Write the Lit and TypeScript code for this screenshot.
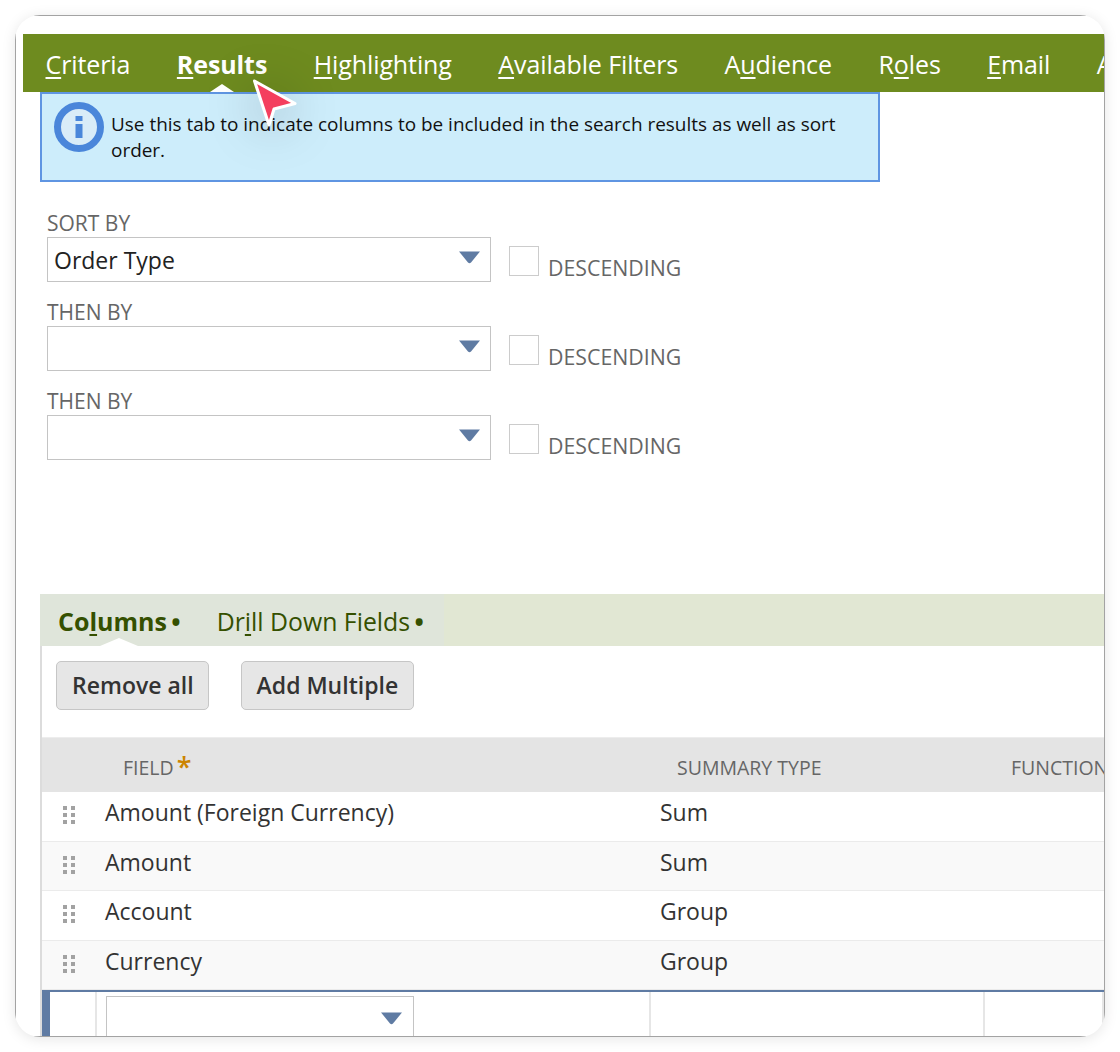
import { LitElement, html, css, svg } from "lit";
import { customElement } from "lit/decorators.js";

const caret = svg`<svg class="caret" width="23" height="14" viewBox="0 0 23 14"><path d="M1 1.5H22L13 12.5Q11.5 13.8 10 12.5Z" fill="#5f7ba3"/></svg>`;

const grip = html`<svg class="grip" width="12" height="18" viewBox="0 0 12 18"><g fill="#a2a2a2"><rect x="0" y="0" width="4" height="4"/><rect x="8" y="0" width="4" height="4"/><rect x="0" y="7" width="4" height="4"/><rect x="8" y="7" width="4" height="4"/><rect x="0" y="14" width="4" height="4"/><rect x="8" y="14" width="4" height="4"/></g></svg>`;

@customElement("app-root")
export class AppRoot extends LitElement {
  static styles = css`
    :host { display: block; width: 1120px; height: 1052px; background: #fff; font-family: "Open Sans", sans-serif; overflow: hidden; }
    .page { padding: 15px; height: 1052px; box-sizing: border-box; }
    .win { height: 1022px; border-radius: 25px; overflow: hidden; background: #fff; box-shadow: 0 2px 14px rgba(0,0,0,.1); }
    .frame { position: relative; height: 100%; box-sizing: border-box; border: 1px solid #a3a3a3; padding: 18px 0 0 7px; overflow: hidden; }
    .tabs { display: flex; height: 58px; background: #6e8b1f; color: #fff; font-size: 25px; line-height: 60px; padding-left: 22.5px; gap: 46.5px; white-space: nowrap; overflow: hidden; letter-spacing: -0.1px; }
    .tabs span { flex: none; position: relative; }
    .tabs u, .sub u { text-underline-offset: 3px; text-decoration-thickness: 2px; }
    .tabs .on { font-weight: 700; }
    .tabs .on::after { content: ""; position: absolute; left: 33px; bottom: 0; border: 12px solid transparent; border-top: 0; border-bottom: 8px solid #fff; }
    .info { margin: 0 0 0 17px; width: 840px; height: 90px; box-sizing: border-box; background: #cdedfb; border: 2px solid #5f95e2; display: flex; gap: 6px; padding: 7px 11px; font-size: 18.95px; line-height: 26px; color: #111; }
    .info svg { flex: none; }
    .info p { margin: 10px 0 0; width: 750px; }
    .form { margin: 27px 0 0 24px; height: 385px; }
    .lab { font-size: 21px; line-height: 28px; color: #666; }
    .frow { display: flex; height: 61px; align-items: flex-start; }
    .sel { width: 444px; height: 45px; box-sizing: border-box; border: 1px solid #c4c4c4; display: flex; align-items: center; justify-content: space-between; padding: 0 9px 0 6px; font-size: 23px; color: #222; }
    .sel svg { margin-top: -5px; }
    .chk { width: 30px; height: 30px; box-sizing: border-box; border: 1px solid #ccc; margin: 9px 0 0 18px; }
    .dl { font-size: 21.3px; color: #666; margin: 17px 0 0 9px; line-height: 28px; }
    .sub { margin-left: 17px; height: 52px; background: #e1e7d3; font-size: 24.8px; line-height: 55px; color: #355000; }
    .subin { width: 404px; height: 52px; background: #dfe5da; box-sizing: border-box; padding-left: 18px; display: flex; gap: 36px; white-space: nowrap; position: relative; }
    .subin b { font-size: 25px; }
    .subin .d { font-weight: 700; margin-left: -2px; }
    .subin .n { position: absolute; left: 60px; bottom: 0; border: 19px solid transparent; border-top: 0; border-bottom: 8px solid #fff; width: 0; }
    .panel { margin-left: 17px; border-left: 2px solid #dcdcdc; padding: 15px 0 0 0; }
    .btns { display: flex; gap: 32px; padding-left: 14px; }
    .btn { height: 49px; box-sizing: border-box; border: 1px solid #c6c6c6; border-radius: 5px; background: #e6e6e6; font-size: 23px; font-weight: 600; color: #333; line-height: 47px; padding: 0 14px 0 15px; }
    .btn + .btn { padding-right: 15px; }
    .row, .head { display: grid; grid-template-columns: 54px 554px 334px 1fr; width: 1062px; }
    .grid { margin-top: 27px; width: 1062px; overflow: hidden; }
    .head { height: 55px; background: #e4e4e4; font-size: 19.5px; color: #666; line-height: 60px; border-top: 1px solid #ededed; box-sizing: border-box; white-space: nowrap; }
    .head div:nth-child(2), .head div:nth-child(3), .head div:nth-child(4) { padding-left: 27px; }
    .head .star { color: #cc8400; font-size: 27px; font-weight: 600; line-height: 0; margin-left: 3px; vertical-align: -2px; }
    .row { height: 49.6px; box-sizing: border-box; font-size: 23px; line-height: 40px; color: #333; border-bottom: 1px solid #ebebeb; }
    .row:nth-child(even) { background: #f9f9f9; }
    .row > div:nth-child(1) { display: flex; justify-content: center; padding-top: 14px; box-sizing: border-box; }
    .row > div:nth-child(2) { padding-left: 9px; }
    .row > div:nth-child(3) { padding-left: 10px; }
    .new { display: grid; grid-template-columns: 55px 554px 334px 1fr; height: 46px; border-top: 2px solid #5f7ba3; box-sizing: border-box; }
    .new > div { border-right: 2px solid #e6e6e6; box-sizing: border-box; }
    .new > div:first-child { border-left: 8px solid #5f7ba3; }
    .new .sel { width: 308px; margin: 4px 0 0 9px; height: 48px; border: 1.5px solid #c4c4c4; padding-right: 10px; }
    .cur { position: absolute; left: 220px; top: 48px; filter: drop-shadow(0 6px 24px rgba(0,0,0,.3)); }
  `;

  private field(label: string, value = "") {
    return html`<div class="lab">${label}</div>
      <div class="frow">
        <div class="sel"><span>${value}</span>${caret}</div>
        <div class="chk"></div>
        <div class="dl">DESCENDING</div>
      </div>`;
  }

  render() {
    const rows = [
      ["Amount (Foreign Currency)", "Sum"],
      ["Amount", "Sum"],
      ["Account", "Group"],
      ["Currency", "Group"],
    ];
    return html`<div class="page"><div class="win"><div class="frame">
      <div class="tabs">
        <span><u>C</u>riteria</span>
        <span class="on"><u>R</u>esults</span>
        <span><u>H</u>ighlighting</span>
        <span><u>A</u>vailable Filters</span>
        <span>A<u>u</u>dience</span>
        <span>R<u>o</u>les</span>
        <span><u>E</u>mail</span>
        <span>Access</span>
      </div>
      <div class="info">
        <svg width="52" height="52" viewBox="0 0 52 52"><circle cx="26" cy="26" r="21.5" fill="#d9ecf8" stroke="#4a86da" stroke-width="7"/><rect x="22.5" y="15" width="7" height="5" fill="#4a86da"/><rect x="22.5" y="23" width="7" height="14" fill="#4a86da"/></svg>
        <p>Use this tab to indicate columns to be included in the search results as well as sort order.</p>
      </div>
      <div class="form">
        ${this.field("SORT BY", "Order Type")}
        ${this.field("THEN BY")}
        ${this.field("THEN BY")}
      </div>
      <div class="sub"><div class="subin">
        <span><b>Co<u>l</u>umns</b> <span class="d">•</span></span><span>Dr<u>i</u>ll Down Fields <span class="d">•</span></span><i class="n"></i>
      </div></div>
      <div class="panel">
        <div class="btns"><div class="btn">Remove all</div><div class="btn">Add Multiple</div></div>
        <div class="grid">
          <div class="head"><div></div><div>FIELD<span class="star">*</span></div><div>SUMMARY TYPE</div><div>FUNCTION</div></div>
          <div>
            ${rows.map(r => html`<div class="row"><div>${grip}</div><div>${r[0]}</div><div>${r[1]}</div><div></div></div>`)}
          </div>
          <div class="new"><div></div><div><div class="sel"><span></span>${caret}</div></div><div></div><div></div></div>
        </div>
      </div>
      <svg class="cur" width="64" height="64" viewBox="0 0 64 64"><path d="M18.5 17L59 39.5L38 45L33 61Z" fill="#f43f5e" stroke="#fff" stroke-width="3" stroke-linejoin="round"/></svg>
    </div></div></div>`;
  }
}
